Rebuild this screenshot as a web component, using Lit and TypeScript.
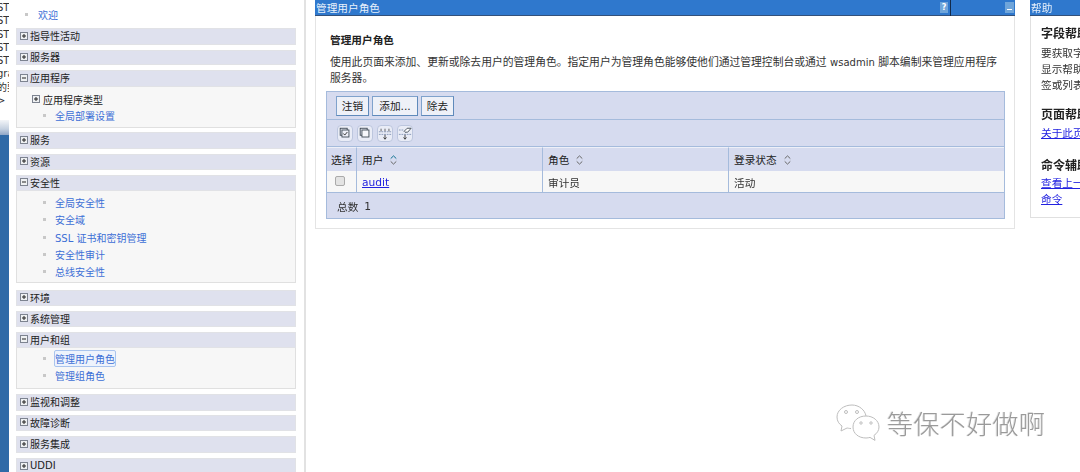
import { LitElement, html, css, svg } from "lit";
import { customElement } from "lit/decorators.js";

type Group = { t: string; h: number; mt: number; open?: boolean; bodyH?: number; pt?: number; items?: string[]; cur?: string; sub?: boolean };

const groups: Group[] = [
  { t: "指导性活动", h: 17, mt: 0 },
  { t: "服务器", h: 15, mt: 5 },
  { t: "应用程序", h: 17, mt: 5, open: true, bodyH: 41, pt: 4, sub: true, items: ["全局部署设置"] },
  { t: "服务", h: 17, mt: 4 },
  { t: "资源", h: 16, mt: 5 },
  { t: "安全性", h: 16, mt: 5, open: true, bodyH: 92, pt: 3, items: ["全局安全性", "安全域", "SSL 证书和密钥管理", "安全性审计", "总线安全性"] },
  { t: "环境", h: 16, mt: 7 },
  { t: "系统管理", h: 16, mt: 5 },
  { t: "用户和组", h: 16, mt: 5, open: true, bodyH: 41, pt: 2, items: ["管理用户角色", "管理组角色"], cur: "管理用户角色" },
  { t: "监视和调整", h: 17, mt: 5 },
  { t: "故障诊断", h: 16, mt: 4 },
  { t: "服务集成", h: 17, mt: 5 },
  { t: "UDDI", h: 17, mt: 5 },
];

const plus = html`<svg class="tg" viewBox="0 0 8 8" width="8" height="8"><rect x=".5" y=".5" width="7" height="7" fill="#eef0f2" stroke="#7d8390"/><path d="M2 4h4M4 2v4" stroke="#222"/></svg>`;
const minus = html`<svg class="tg" viewBox="0 0 8 8" width="8" height="8"><rect x=".5" y=".5" width="7" height="7" fill="#eef0f2" stroke="#7d8390"/><path d="M2 4h4" stroke="#222"/></svg>`;

const sortIcon = (c: string, c2: string) => svg`<svg class="sort" width="7" height="10" viewBox="0 0 7 10"><path d="M.7 3.600 3.500 .9 6.300 3.600" fill="none" stroke="${c}"/><path d="M.7 6.400 3.500 9.100 6.300 6.400" fill="none" stroke="${c2}"/></svg>`;

@customElement("app-root")
export class AppRoot extends LitElement {
  static styles = css`
    :host { display: block; position: relative; width: 1080px; height: 472px; overflow: hidden; background: #fff; font-family: "DejaVu Sans", "Noto Sans CJK SC", sans-serif; font-size: 10px; color: #222; }
    .page { display: flex; height: 472px; align-items: stretch; filter: blur(.3px); }
    .strip { width: 9px; flex: none; display: flex; flex-direction: column; background: #fff; overflow: hidden; }
    .strip-text { height: 120px; flex: none; display: flex; flex-direction: column; padding-top: 1px; box-sizing: border-box; font-size: 10px; line-height: 13.3px; white-space: nowrap; color: #333; }
    .strip-text span { display: block; margin-left: -3px; }
    .strip-bar { height: 15px; flex: none; background: linear-gradient(#f3f5f8, #c4d0e0 60%, #8fa6c6); }
    .strip-blue { flex: 1; background: #2f6aa7; }
    .nav { width: 297px; flex: none; box-sizing: border-box; padding: 0 8px 0 7px; border-right: 2px solid #e2e2e2; background: #fff; overflow: hidden; }
    .welcome { height: 28px; display: flex; align-items: center; padding-left: 9px; gap: 10px; color: #3d6fd6; }
    .bullet { width: 3px; height: 3px; background: #c8c8c8; flex: none; }
    .head { box-sizing: border-box; background: #dfe1ee; border: 1px solid #e1e2e6; display: flex; align-items: center; gap: 2px; padding: 0 0 2px 3px; color: #222; }
    .tg { flex: none; }
    .body { box-sizing: border-box; background: #f7f7f7; border: 1px solid #e0e0e0; border-top: 0; }
    .row { height: 17.3px; display: flex; align-items: center; gap: 9px; padding-left: 26px; color: #3d6fd6; white-space: nowrap; }
    .row.sub { height: 16px; padding-left: 15px; color: #222; gap: 3px; }
    .row.tight { height: 16px; }
    .cur { outline: 1px solid #a9c4ee; background: #eef3fc; border-radius: 1px; }
    .main { flex: none; width: 700px; margin-left: 9px; }
    .portlet { width: 700px; box-sizing: border-box; border: 1px solid #e4e4e4; border-top: 0; height: 229px; background: #fff; }
    .bar { background: #2f78cd; border-bottom: 1px solid #33517a; height: 16px; margin: 0 -1px; display: flex; align-items: center; color: #fff; font-size: 10.67px; box-sizing: border-box; }
    .bar .title { flex: 1; padding-left: 1px; color: #e8f1fb; }
    .b-q { width: 8px; height: 11px; background: #6fa5da; color: #fff; font-size: 8px; font-weight: bold; line-height: 11px; text-align: center; margin-right: 2px; }
    .b-sep { width: 1px; height: 16px; background: #122a4a; margin-right: 54px; }
    .b-m { width: 9px; height: 11px; background: #6fa5da; margin-right: 1px; position: relative; }
    .b-m i { position: absolute; left: 2px; right: 2px; bottom: 3px; height: 1px; background: #fff; }
    .content { padding: 0 10px; font-size: 10.67px; }
    h2 { margin: 0; padding: 17px 0 0 4px; font-size: 10.67px; line-height: 15px; font-weight: bold; color: #222; }
    .desc { margin: 0; padding: 7px 0 0 4px; font-size: 10.8px; line-height: 16px; color: #333; height: 43px; box-sizing: border-box; width: 676px; }
    .desc span { font-size: 10px; }
    .tbl { width: 679px; box-sizing: border-box; border: 1px solid #a5bbdc; background: #d6dbef; display: flex; flex-direction: column; }
    .tools { height: 28px; box-sizing: border-box; border-bottom: 1px solid #a5bbdc; display: flex; align-items: center; gap: 3px; padding-left: 9px; }
    .btn { height: 20px; box-sizing: border-box; border: 1px solid #7fa2cc; border-right-color: #5f8abb; border-bottom-color: #5f8abb; background: #eef1f8; display: flex; align-items: center; justify-content: center; color: #222; }
    .w33 { width: 33px; }
    .w46 { width: 46px; }
    .icons { height: 26px; box-sizing: border-box; margin-top: 1px; border-bottom: 1px solid #a5bbdc; display: flex; align-items: center; gap: 4px; padding-left: 10px; }
    .ic { width: 16px; height: 17px; box-sizing: border-box; border-radius: 4px; background: #e9ecf6; border: 1px solid #bcc6de; display: block; }
    .grid { display: grid; grid-template-columns: 30px 186px 186px 1fr; }
    .th { height: 24px; box-sizing: border-box; border-right: 1px solid #a5bbdc; border-top: 1px solid #eef0f8; display: flex; align-items: center; gap: 7px; padding-left: 5px; }
    .th.c0 { padding-left: 4px; }
    .td { height: 22px; background: #f7f7f7; box-sizing: border-box; border-right: 1px solid #a5bbdc; border-bottom: 1px solid #a5bbdc; display: flex; align-items: center; padding: 1px 0 0 5px; color: #333; }
    .th:nth-child(4), .td:nth-child(8) { border-right: 0; }
    .td a { color: #2222e0; text-decoration: underline; }
    .check { width: 10px; height: 10px; box-sizing: border-box; border: 1px solid #aaa; border-radius: 2px; background: #e3e3e3; margin: -2px 0 0 3px; }
    .total { height: 25px; display: flex; align-items: center; padding: 1px 0 0 10px; box-sizing: border-box; gap: 6px; color: #333; }
    .help { width: 50px; flex: none; margin-left: 15px; overflow: hidden; font-size: 10.67px; }
    .hbar { background: #2f78cd; height: 16px; border-bottom: 1px solid #33517a; box-sizing: border-box; color: #e8f1fb; display: flex; align-items: center; padding-left: 1px; white-space: nowrap; }
    .hbody { border: 1px solid #e0e0e0; border-top: 0; border-right: 0; height: 202px; box-sizing: border-box; padding: 10px 0 0 10px; white-space: nowrap; line-height: 16px; color: #333; }
    .hbody h3 { margin: 0; font-size: 12px; line-height: 16px; font-weight: bold; color: #222; }
    .hbody p { margin: 3px 0 0; }
    .hbody .p1 { margin: 4px 0 13px; }
    .hbody .p2 { margin: 3px 0 16px; }
    .hbody .p3 { margin: 2px 0 0; }
    .hbody a { color: #2222e0; text-decoration: underline; }
    .wm { position: absolute; left: 836px; top: 403px; display: flex; align-items: center; gap: 7px; color: #9a9a9a; font-size: 26px; letter-spacing: .4px; line-height: 40px; font-family: "Noto Sans CJK SC", sans-serif; font-weight: 300; text-shadow: 1px 1px 0 #fff, -1px 0 0 #e2e2e2; }
  `;

  private group(g: Group) {
    return html`<div class="head" style="height:${g.h}px;margin-top:${g.mt}px">${g.open ? minus : plus}<span>${g.t}</span></div>
      ${g.open ? html`<div class="body" style="height:${g.bodyH}px;padding-top:${g.pt}px">
        ${g.sub ? html`<div class="row sub">${plus}<span>应用程序类型</span></div>` : ""}
        ${g.items!.map(i => html`<div class="row ${g.sub ? "tight" : ""}"><i class="bullet"></i><span class="${i === g.cur ? "cur" : ""}">${i}</span></div>`)}
      </div>` : ""}`;
  }

  render() {
    const st = ["ST", "ST", "ST", "ST", "ST", "gra", "的要", ">"];
    return html`<div class="page">
      <div class="strip">
        <div class="strip-text">${st.map(s => html`<span>${s}</span>`)}</div>
        <div class="strip-bar"></div>
        <div class="strip-blue"></div>
      </div>
      <nav class="nav">
        <div class="welcome"><i class="bullet"></i><span>欢迎</span></div>
        ${groups.map(g => this.group(g))}
      </nav>
      <main class="main">
        <div class="portlet">
          <div class="bar"><span class="title">管理用户角色</span><span class="b-q">?</span><i class="b-sep"></i><span class="b-m"><i></i></span></div>
          <div class="content">
            <h2>管理用户角色</h2>
            <p class="desc">使用此页面来添加、更新或除去用户的管理角色。指定用户为管理角色能够使他们通过管理控制台或通过 <span>wsadmin</span> 脚本编制来管理应用程序服务器。</p>
            <div class="tbl">
              <div class="tools">
                <div class="btn w33">注销</div>
                <div class="btn w46">添加...</div>
                <div class="btn w33">除去</div>
              </div>
              <div class="icons">
                <svg class="ic" viewBox="0 0 16 17"><rect x="2.500" y="2.500" width="8" height="8" fill="none" stroke="#3a4550"/><rect x="4.500" y="4.500" width="8" height="8" fill="#eef0f8" stroke="#3a4550"/><path d="M6.200 8.500l1.500 1.800 3-3.500" fill="none" stroke="#222"/></svg>
                <svg class="ic" viewBox="0 0 16 17"><rect x="2.500" y="2.500" width="8" height="8" fill="none" stroke="#3a4550"/><rect x="4.500" y="4.500" width="8" height="8" fill="#f7f8fc" stroke="#3a4550"/></svg>
                <svg class="ic" viewBox="0 0 16 17"><path d="M1 6.500h14M1 9.500h14" stroke="#7f90b2" stroke-dasharray="2 1"/><path d="M3.500 3v3M8 3v3M12.500 3v3" stroke="#555"/><path d="M8 10v5M6.300 13l1.700 2 1.700-2" fill="none" stroke="#333"/></svg>
                <svg class="ic" viewBox="0 0 16 17"><path d="M1 4.500h6M1 9.500h14" stroke="#7f90b2" stroke-dasharray="2 1"/><path d="M7 6l3.500-3.500H15L11 7H8z" fill="#fff" stroke="#3a4550"/><path d="M8 10v5M6.300 13l1.700 2 1.700-2" fill="none" stroke="#333"/></svg>
              </div>
              <div class="grid">
                <div class="th c0">选择</div>
                <div class="th">用户 ${sortIcon("#0b6f8f", "#666")}</div>
                <div class="th">角色 ${sortIcon("#666", "#666")}</div>
                <div class="th">登录状态 ${sortIcon("#666", "#666")}</div>
                <div class="td"><i class="check"></i></div>
                <div class="td"><a href="#">audit</a></div>
                <div class="td">审计员</div>
                <div class="td">活动</div>
              </div>
              <div class="total"><span>总数</span><span>1</span></div>
            </div>
          </div>
        </div>
      </main>
      <aside class="help">
        <div class="hbar">帮助</div>
        <div class="hbody">
          <h3>字段帮助</h3>
          <p class="p1">要获取字段帮助信息<br>显示帮助信息的<br>签或列表项</p>
          <h3>页面帮助</h3>
          <p class="p2"><a href="#">关于此页面的更多信息</a></p>
          <h3>命令辅助</h3>
          <p class="p3"><a href="#">查看上一个操作的管理脚本</a><br><a href="#">命令</a></p>
        </div>
      </aside>
    </div>
    <div class="wm">
      <svg width="44" height="38" viewBox="0 0 44 38" fill="none" stroke="#bdbdbd" stroke-width="1"><path d="M16 1C8 1 1 6 1 13c0 4 2 7 5 9l-1 5 6-3c1 0 2 .5 4 .5"/><path d="M30 12c-7.500 0-13 4.500-13 11s5.500 11 13 11c1.500 0 3-.3 4-.6l5 3-1-5c3-2 5-5 5-8.400 0-6.500-6-11-13-11z"/><path d="M30 12C29 6 23 1 16 1"/><circle cx="10" cy="8" r="1.500"/><circle cx="21" cy="8" r="1.500"/><circle cx="25" cy="19" r="1.200"/><circle cx="35" cy="19" r="1.200"/></svg>
      <span>等保不好做啊</span>
    </div>`;
  }
}
